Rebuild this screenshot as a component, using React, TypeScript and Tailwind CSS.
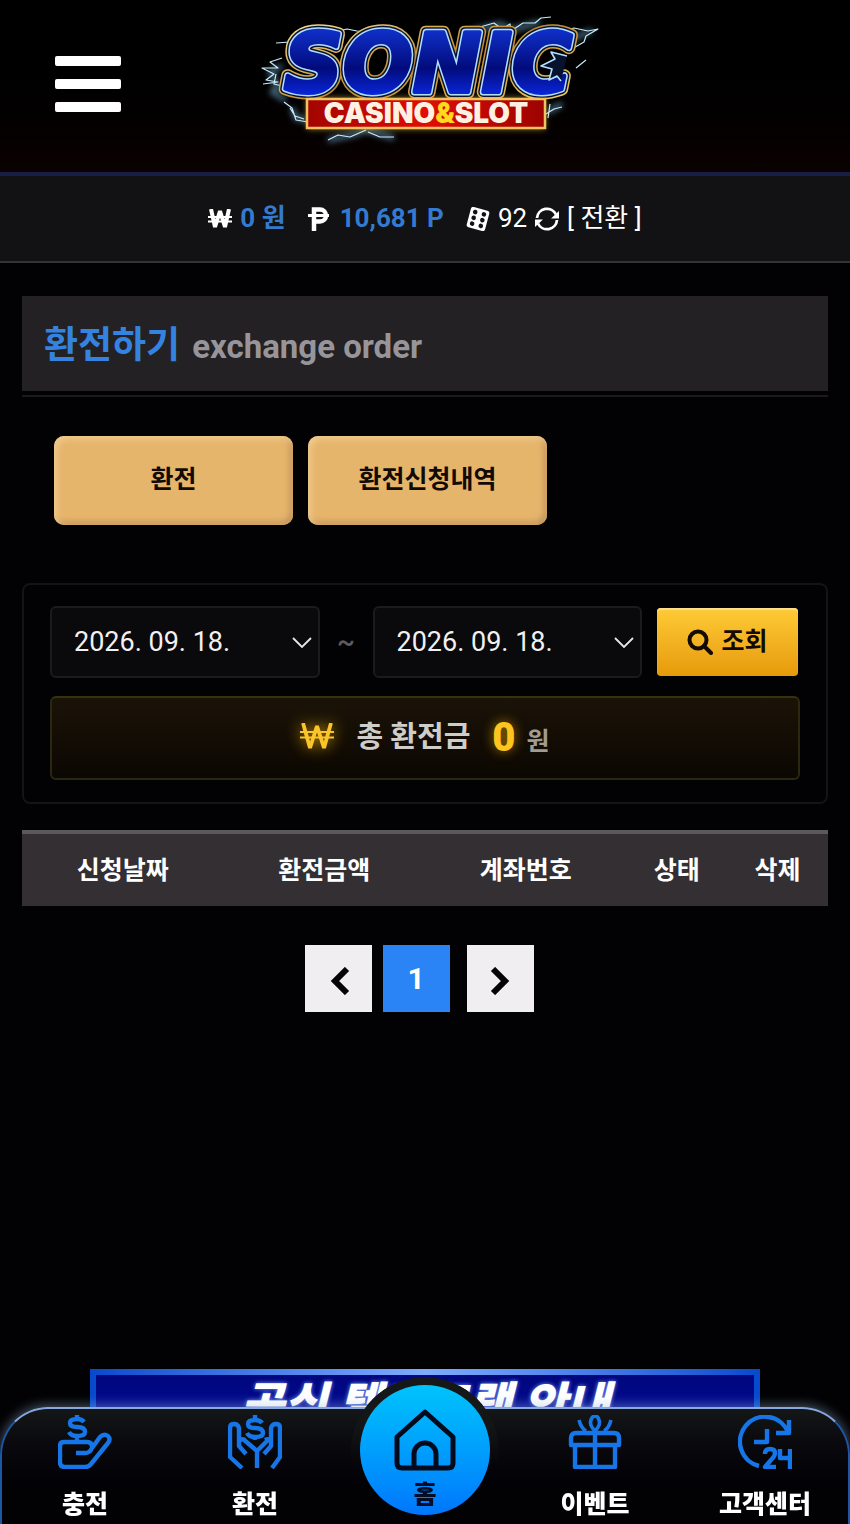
import React from 'react';

interface NavItemProps {
  label: string;
  children: React.ReactNode;
}

const NavItem: React.FC<NavItemProps> = ({ label, children }) => {
  return (
    <a href="#" className="flex flex-1 flex-col items-center gap-[18px] pt-[6px] text-[25px] leading-9 font-black text-white">
      <svg viewBox="0 0 54 54" className="size-[54px] text-[#1676e8]" fill="none" stroke="currentColor" strokeWidth="4.4" strokeLinejoin="round">
        {children}
      </svg>
      {label}
    </a>
  );
};

interface DateSelectProps {
  label: string;
}

const DateSelect: React.FC<DateSelectProps> = ({ label }) => {
  return (
    <div className="relative flex-1">
      <select
        aria-label={label}
        className="h-[72px] w-full appearance-none rounded-md border-2 border-[#1b1a1d] bg-[#0a090c] pl-[22px] text-[27px] text-[#f2f0f3]"
      >
        <option>2026. 09. 18.</option>
      </select>
      <svg viewBox="0 0 20 12" className="pointer-events-none absolute top-[31px] right-2 h-3 w-5" fill="none" stroke="#e8e6e9" strokeWidth="1.8">
        <path d="M1 1l9 9 9-9" />
      </svg>
    </div>
  );
};

const Logo: React.FC = () => {
  return (
    <svg viewBox="0 0 370 160" className="w-full" role="img" aria-label="SONIC CASINO&SLOT">
      <defs>
        <linearGradient id="letters" x1="0" y1="0" x2="0" y2="1">
          <stop offset="0.15" stopColor="#0f2fc8" />
          <stop offset="0.55" stopColor="#020b7c" />
          <stop offset="0.9" stopColor="#0b2df0" />
        </linearGradient>
        <linearGradient id="gold" x1="0" y1="0" x2="1" y2="1">
          <stop offset="0" stopColor="#ffe9a0" />
          <stop offset="0.5" stopColor="#c48a2c" />
          <stop offset="1" stopColor="#ffd766" />
        </linearGradient>
        <linearGradient id="plate" x1="0" y1="0" x2="1" y2="0">
          <stop offset="0" stopColor="#a30400" />
          <stop offset="0.5" stopColor="#e00d05" />
          <stop offset="1" stopColor="#9b0300" />
        </linearGradient>
        <filter id="glow" x="-20%" y="-40%" width="140%" height="180%">
          <feGaussianBlur stdDeviation="3" />
        </filter>
      </defs>
      <g fill="none" stroke="#7fc4ea" strokeLinejoin="round">
        <g filter="url(#glow)" strokeWidth="4" opacity="0.7">
          <path d="M42 66l-12 6 8 14-6 6 14 8M52 108l4 10 10 2M88 140l28-6 10-4 28 8M330 40l18-8 4-2M308 112l14-8M230 32l30-8 12 6 28-8" />
        </g>
        <g strokeWidth="1.2" stroke="#c9ecfa">
          <path d="M50 42l-14 1M42 58l-12 4 8 6-16 0 12 6-8 6 12 2-15 2M36 74l-2 10 8 2M50 108l5 8 9 3M44 102l8 6 4 12 12 2M88 140l10-5 12 2 16-7M128 132l12 5 14 0" />
          <path d="M95 32l12-3 10 2 12 1M222 34l18-7 14-4 8 6 8-5 1 7 12-8 12 0 6-5 10-1M318 32l16-4 14 3 10-2-12 7-2 6-14 8M336 68l10-8M306 114l8-5 8-2M310 104l-2 14" />
        </g>
      </g>
      <rect x="67" y="98" width="238" height="31" fill="#ffcf58" filter="url(#glow)" opacity="0.6" />
      <g strokeLinejoin="round">
        <use href="#word" stroke="url(#gold)" strokeWidth="13" />
        <use href="#word" stroke="#06122e" strokeWidth="10" />
        <use href="#word" stroke="#b4e0ff" strokeWidth="7" />
        <use href="#word" stroke="url(#letters)" strokeWidth="4" />
        {/* jagged mouth of the last letter */}
        <path d="M327 56l-16-4 4 7-14 7 11 3-3 11 8-4 4 5" fill="#06122e" stroke="#b4e0ff" strokeWidth="1.6" />
        <defs>
          <text id="word" x="44" y="92" fill="url(#letters)" fontFamily="DejaVu Sans" fontWeight="700" fontStyle="italic" fontSize="82">
            SONIC
          </text>
        </defs>
      </g>
      <rect x="67" y="99" width="238" height="29" fill="url(#plate)" stroke="#f3c260" strokeWidth="2.5" />
      <text x="186" y="123" textAnchor="middle" fontFamily="Inter" fontWeight="900" fontSize="28" fill="#fff1e2">
        CASINO<tspan fill="#ffd91c">&amp;</tspan>SLOT
      </text>
    </svg>
  );
};

const App: React.FC = () => {
  return (
    <div className="flex min-h-screen flex-col bg-[#020103] font-['Roboto','Noto_Sans_CJK_KR',sans-serif] text-white">
      <header className="grid h-[172px] grid-cols-[1fr_370px_1fr] items-start bg-linear-to-b from-black to-[#0b0101]">
        <button aria-label="menu" className="mt-14 ml-[55px] flex w-[66px] flex-col gap-[13px]">
          <span className="h-[10px] w-full rounded-xs bg-white" />
          <span className="h-[10px] w-full rounded-xs bg-white" />
          <span className="h-[10px] w-full rounded-xs bg-white" />
        </button>
        <Logo />
      </header>

      <div className="flex h-[91px] items-center justify-center border-t-4 border-b-2 border-t-[#181e46] border-b-[#343335] bg-[#121113] text-[26px]">
        <svg viewBox="0 0 24 20" className="mr-2 h-5 w-6" fill="none" stroke="currentColor">
          <path d="M3 0l4 18L12 2l5 16L21 0" strokeWidth="4" strokeLinejoin="bevel" />
          <path d="M0 8h24M0 12.500h24" strokeWidth="2" />
        </svg>
        <span className="font-bold text-[#347bd0]">0 원</span>
        <svg viewBox="0 0 22 24" className="mr-[10px] ml-[22px] h-6 w-[22px]" fill="none" stroke="currentColor">
          <path d="M6 24V2.500h6a5.500 5.500 0 0 1 0 12H6" strokeWidth="4.500" />
          <path d="M0 8.500h21" strokeWidth="3" />
        </svg>
        <span className="font-bold text-[#347bd0]">10,681 P</span>
        <svg viewBox="0 0 24 24" className="mr-2 ml-[22px] size-6">
          <g transform="rotate(15 12 12)">
            <rect x="2.5" y="1.5" width="19" height="21" rx="2.5" fill="#fff" />
            <g fill="#121113">
              <circle cx="7.5" cy="6" r="2.3" />
              <circle cx="16.5" cy="6" r="2.3" />
              <circle cx="7.5" cy="12" r="2.3" />
              <circle cx="16.5" cy="12" r="2.3" />
              <circle cx="7.5" cy="18" r="2.3" />
              <circle cx="16.5" cy="18" r="2.3" />
            </g>
          </g>
        </svg>
        <span>92</span>
        <button className="flex items-center">
          <svg viewBox="0 0 24 24" className="mx-2 size-6" fill="none" stroke="currentColor" strokeWidth="2.8">
            <path d="M2 11A10 10 0 0 1 21 7.500M22 13A10 10 0 0 1 3 16.500" />
            <path d="M24 4v7.500h-8zM0 20v-7.500h8z" fill="currentColor" stroke="none" />
          </svg>
          [ 전환 ]
        </button>
      </div>

      <main className="px-[22px] pt-[33px]">
        <div className="border-b-2 border-[#1b1a1c] pb-1">
          <h1 className="flex h-[95px] items-center gap-3 bg-[#232123] px-[22px] pt-1 text-[37px] font-bold text-[#3583e0]">
            환전하기
            <small className="pt-[2px] text-[33px] font-bold text-[#97959a]">exchange order</small>
          </h1>
        </div>

        <div className="mt-[39px] ml-8 flex gap-[15px] text-[25px] font-bold text-[#120a04]">
          <button className="h-[89px] w-[239px] rounded-[10px] bg-[#e6b56c] pb-[2px] shadow-[inset_3px_3px_6px_#f0cb90,inset_-3px_-3px_6px_#c0935a]">
            환전
          </button>
          <button className="h-[89px] w-[239px] rounded-[10px] bg-[#e6b56c] pb-[2px] shadow-[inset_3px_3px_6px_#f0cb90,inset_-3px_-3px_6px_#c0935a]">
            환전신청내역
          </button>
        </div>

        <section className="mt-[58px] rounded-lg border-2 border-[#141315] px-[26px] pt-[21px] pb-[22px]">
          <div className="flex items-center">
            <DateSelect label="시작일" />
            <span className="w-[53px] text-center text-[27px] font-medium text-[#5d5b5f]">~</span>
            <DateSelect label="종료일" />
            <button className="mr-[2px] ml-[15px] flex h-[68px] w-[141px] items-center justify-center gap-2 rounded-sm bg-linear-to-b from-[#fecb35] to-[#e69a07] text-[25px] font-bold text-[#150a02] shadow-[inset_0_2px_1px_#ffe08a]">
              <svg viewBox="0 0 26 26" className="size-[26px]" fill="none" stroke="currentColor" strokeWidth="4">
                <circle cx="11" cy="11" r="8.5" />
                <path d="M17 17l7 7" strokeLinecap="round" />
              </svg>
              조회
            </button>
          </div>
          <div className="mt-[18px] flex h-[84px] items-center justify-center rounded-md border-2 border-[#2b2810] border-t-[#35330c] bg-linear-to-b from-[#1b1308] to-[#0b0702]">
            <svg viewBox="0 0 34 27" className="mr-[22px] mb-1 h-[27px] w-[34px] drop-shadow-[0_0_8px_#c99400]" fill="none" stroke="#fcc42b">
              <path d="M3 0l7 25L17 3l7 22L31 0" strokeWidth="3.8" strokeLinejoin="bevel" />
              <path d="M0 9h34M0 14.500h34" strokeWidth="2" />
            </svg>
            <span className="text-[29px] font-bold text-[#cfcdca]">총 환전금</span>
            <strong className="mr-[11px] ml-[22px] text-[40px] font-black text-[#fdc51e] text-shadow-[0_0_12px_#a87b00]">0</strong>
            <span className="mt-2 text-[25px] font-bold text-[#a19b92]">원</span>
          </div>
        </section>

        <table className="mt-[26px] w-full table-fixed border-t-4 border-[#5c585c] bg-[#332f33] text-[25px]">
          <thead>
            <tr className="h-[74px]">
              <th className="w-1/4 pt-[2px]">신청날짜</th>
              <th className="w-1/4 pt-[2px]">환전금액</th>
              <th className="w-1/4 pt-[2px]">계좌번호</th>
              <th className="w-1/8 pt-[2px]">상태</th>
              <th className="w-1/8 pt-[2px]">삭제</th>
            </tr>
          </thead>
        </table>

        <div className="mt-[39px] flex justify-center pr-3">
          <button aria-label="prev" className="grid size-[67px] place-items-center bg-[#f1eef1] pt-1 pl-1">
            <svg viewBox="0 0 20 28" className="h-7 w-5" fill="none" stroke="#050505" strokeWidth="6">
              <path d="M17 2L5 14l12 12" />
            </svg>
          </button>
          <button className="mr-[17px] ml-[11px] size-[67px] bg-[#2a84f5] text-[30px] font-bold">1</button>
          <button aria-label="next" className="grid size-[67px] place-items-center bg-[#f1eef1] pt-1">
            <svg viewBox="0 0 20 28" className="h-7 w-5" fill="none" stroke="#050505" strokeWidth="6">
              <path d="M3 2l12 12L3 26" />
            </svg>
          </button>
        </div>
      </main>

      <a
        href="#"
        className="mx-auto mt-auto h-[38px] w-[670px] max-w-full overflow-hidden bg-linear-to-r from-[#0549cd] via-[#7eabff] to-[#0549cd] px-[6px] pt-[6px]"
      >
        <span className="block h-16 bg-linear-to-b from-[#00067d] to-[#0610a0] pt-1 text-center text-[47px] leading-[52px] font-black text-white italic text-shadow-[0_0_4px_#7d9bff]">
          공식 텔레그램 안내
        </span>
      </a>

      <nav className="sticky bottom-0 h-[117px] rounded-t-[48px] border-x-2 border-t-2 border-[#1e56a3] border-t-[#87a8dd] bg-linear-to-b from-[#141617] to-[#020104] to-70% shadow-[0_-2px_12px_rgba(150,185,215,0.45)]">
        <div className="-mx-[2px] flex">
          <NavItem label="충전">
            <path d="M2 29v18q0 5 5 5h20q4 0 6-3l17-21q3-4 0-7-4-3-8 1l-8 11q-2 5-7 5H18M2 31q0-4 4-4h23q5 0 5 5" />
            <path d="M26 7q-2-3-7-3-7 0-7 4 0 4 7 4 8 0 8 5 0 4-8 4-6 0-8-4M19 0v4M19 21v6" />
          </NavItem>
          <NavItem label="환전">
            <path d="M14 53L2 42V13q0-4 4-4t5 4v18l7 8M29 53V36L15 24M11 27q2-4 6-2M44 53l8-11V13q0-4-4-4t-5 4v18l-7 8M29 36l12-12M43 27q-2-4-6-2" />
            <path d="M34 8q-2-3-7-3-7 0-7 4 0 4 7 4 8 0 8 5 0 4-8 4-6 0-8-4M27 0v5M27 21v4" />
          </NavItem>
          <div className="relative flex-1">
            <div className="absolute -top-8 left-1/2 size-[148px] -translate-x-1/2 rounded-full bg-[#151718] mask-b-from-20% mask-b-to-60%" />
            <a
              href="#"
              className="absolute -top-6 left-1/2 flex size-[130px] -translate-x-1/2 flex-col items-center gap-[6px] rounded-full bg-linear-to-b from-[#00c3fb] to-[#0076fd] pt-6 text-[25px] leading-9 font-black text-[#030d26]"
            >
              <svg viewBox="0 0 62 62" className="size-[62px]" fill="none" stroke="#020a1c" strokeWidth="5" strokeLinejoin="round">
                <path d="M31 3L3 28v26q0 5 5 5h46q5 0 5-5V28z" />
                <path d="M20 59V45a11 11 0 0 1 22 0v14" />
              </svg>
              홈
            </a>
          </div>
          <NavItem label="이벤트">
            <path d="M3 30V23q0-5 5-5h38q5 0 5 5v7zM7 30v22h40V30M27 16v36" />
            <path d="M27 16q-6-6-4-11 1-4 4-4t4 4q2 5-4 11zM11 5q2 8 7 11M43 5q-2 8-7 11" strokeWidth="3.6" />
          </NavItem>
          <NavItem label="고객센터">
            <path d="M21 51A25 25 0 1 1 50 17" />
            <path d="M51 5v13H38M29 14v13H16" />
            <path d="M27 39q0-5 5-5t5 4q0 3-4 7l-6 7h11M42 34v9h10M52 34v20" />
          </NavItem>
        </div>
      </nav>
    </div>
  );
};

export default App;
